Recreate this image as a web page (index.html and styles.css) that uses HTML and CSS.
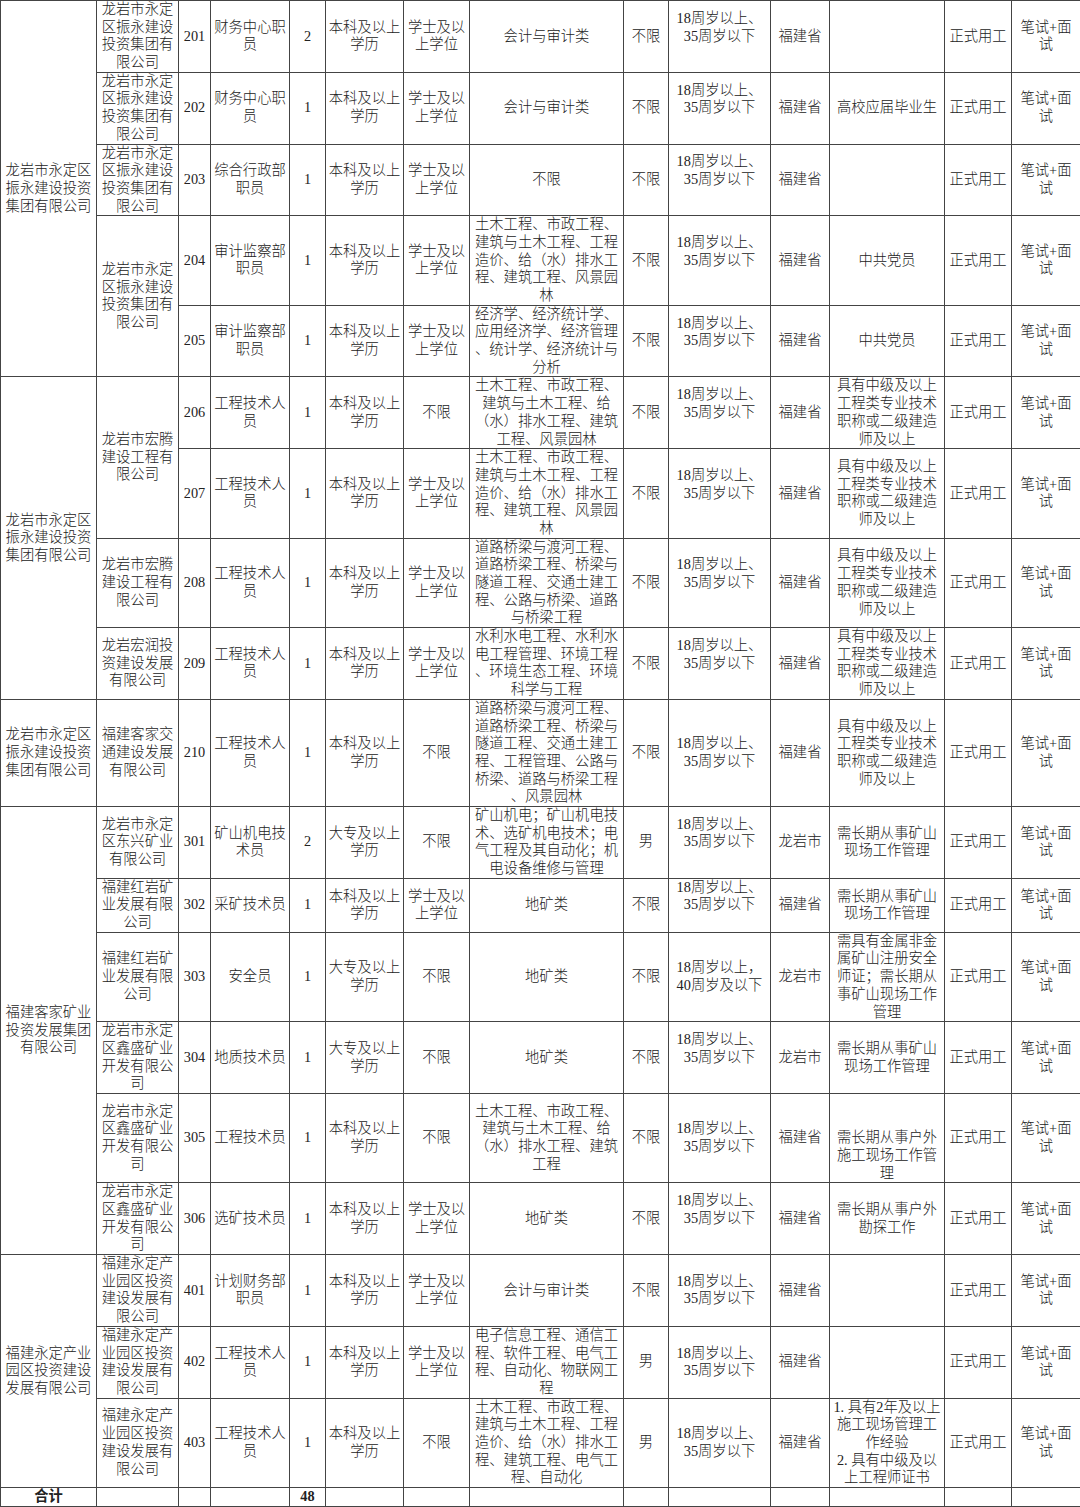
FILE: index.html
```html
<!DOCTYPE html>
<html lang="zh-CN">
<head>
<meta charset="utf-8">
<title>招聘岗位表</title>
<link rel="stylesheet" href="styles.css">
</head>
<body>
<table class="grid">
<colgroup>
<col class="w-grp"><col class="w-sub"><col class="w-code"><col class="w-pos"><col class="w-num"><col class="w-edu"><col class="w-deg"><col class="w-major"><col class="w-sex"><col class="w-age"><col class="w-area"><col class="w-other"><col class="w-type"><col class="w-exam">
</colgroup>
<tbody>
<tr>
<td rowspan="5">龙岩市永定区<br>振永建设投资<br>集团有限公司</td>
<td>龙岩市永定<br>区振永建设<br>投资集团有<br>限公司</td>
<td>201</td><td>财务中心职<br>员</td><td>2</td><td>本科及以上<br>学历</td><td>学士及以<br>上学位</td>
<td>会计与审计类</td><td>不限</td><td class="up">18周岁以上、<br>35周岁以下</td><td>福建省</td><td></td><td>正式用工</td><td>笔试+面<br>试</td>
</tr>
<tr>
<td>龙岩市永定<br>区振永建设<br>投资集团有<br>限公司</td>
<td>202</td><td>财务中心职<br>员</td><td>1</td><td>本科及以上<br>学历</td><td>学士及以<br>上学位</td>
<td>会计与审计类</td><td>不限</td><td class="up">18周岁以上、<br>35周岁以下</td><td>福建省</td><td>高校应届毕业生</td><td>正式用工</td><td>笔试+面<br>试</td>
</tr>
<tr>
<td>龙岩市永定<br>区振永建设<br>投资集团有<br>限公司</td>
<td>203</td><td>综合行政部<br>职员</td><td>1</td><td>本科及以上<br>学历</td><td>学士及以<br>上学位</td>
<td>不限</td><td>不限</td><td class="up">18周岁以上、<br>35周岁以下</td><td>福建省</td><td></td><td>正式用工</td><td>笔试+面<br>试</td>
</tr>
<tr>
<td rowspan="2">龙岩市永定<br>区振永建设<br>投资集团有<br>限公司</td>
<td>204</td><td>审计监察部<br>职员</td><td>1</td><td>本科及以上<br>学历</td><td>学士及以<br>上学位</td>
<td>土木工程、市政工程、<br>建筑与土木工程、工程<br>造价、给（水）排水工<br>程、建筑工程、风景园<br>林</td><td>不限</td><td class="up">18周岁以上、<br>35周岁以下</td><td>福建省</td><td>中共党员</td><td>正式用工</td><td>笔试+面<br>试</td>
</tr>
<tr>
<td>205</td><td>审计监察部<br>职员</td><td>1</td><td>本科及以上<br>学历</td><td>学士及以<br>上学位</td>
<td>经济学、经济统计学、<br>应用经济学、经济管理<br>、统计学、经济统计与<br>分析</td><td>不限</td><td class="up">18周岁以上、<br>35周岁以下</td><td>福建省</td><td>中共党员</td><td>正式用工</td><td>笔试+面<br>试</td>
</tr>
<tr>
<td rowspan="4">龙岩市永定区<br>振永建设投资<br>集团有限公司</td>
<td rowspan="2">龙岩市宏腾<br>建设工程有<br>限公司</td>
<td>206</td><td>工程技术人<br>员</td><td>1</td><td>本科及以上<br>学历</td><td>不限</td>
<td>土木工程、市政工程、<br>建筑与土木工程、给<br>（水）排水工程、建筑<br>工程、风景园林</td><td>不限</td><td class="up">18周岁以上、<br>35周岁以下</td><td>福建省</td><td>具有中级及以上<br>工程类专业技术<br>职称或二级建造<br>师及以上</td><td>正式用工</td><td>笔试+面<br>试</td>
</tr>
<tr>
<td>207</td><td>工程技术人<br>员</td><td>1</td><td>本科及以上<br>学历</td><td>学士及以<br>上学位</td>
<td>土木工程、市政工程、<br>建筑与土木工程、工程<br>造价、给（水）排水工<br>程、建筑工程、风景园<br>林</td><td>不限</td><td class="up">18周岁以上、<br>35周岁以下</td><td>福建省</td><td>具有中级及以上<br>工程类专业技术<br>职称或二级建造<br>师及以上</td><td>正式用工</td><td>笔试+面<br>试</td>
</tr>
<tr>
<td>龙岩市宏腾<br>建设工程有<br>限公司</td>
<td>208</td><td>工程技术人<br>员</td><td>1</td><td>本科及以上<br>学历</td><td>学士及以<br>上学位</td>
<td>道路桥梁与渡河工程、<br>道路桥梁工程、桥梁与<br>隧道工程、交通土建工<br>程、公路与桥梁、道路<br>与桥梁工程</td><td>不限</td><td class="up">18周岁以上、<br>35周岁以下</td><td>福建省</td><td>具有中级及以上<br>工程类专业技术<br>职称或二级建造<br>师及以上</td><td>正式用工</td><td>笔试+面<br>试</td>
</tr>
<tr>
<td>龙岩宏润投<br>资建设发展<br>有限公司</td>
<td>209</td><td>工程技术人<br>员</td><td>1</td><td>本科及以上<br>学历</td><td>学士及以<br>上学位</td>
<td>水利水电工程、水利水<br>电工程管理、环境工程<br>、环境生态工程、环境<br>科学与工程</td><td>不限</td><td class="up">18周岁以上、<br>35周岁以下</td><td>福建省</td><td>具有中级及以上<br>工程类专业技术<br>职称或二级建造<br>师及以上</td><td>正式用工</td><td>笔试+面<br>试</td>
</tr>
<tr>
<td>龙岩市永定区<br>振永建设投资<br>集团有限公司</td>
<td>福建客家交<br>通建设发展<br>有限公司</td>
<td>210</td><td>工程技术人<br>员</td><td>1</td><td>本科及以上<br>学历</td><td>不限</td>
<td>道路桥梁与渡河工程、<br>道路桥梁工程、桥梁与<br>隧道工程、交通土建工<br>程、工程管理、公路与<br>桥梁、道路与桥梁工程<br>、风景园林</td><td>不限</td><td>18周岁以上、<br>35周岁以下</td><td>福建省</td><td>具有中级及以上<br>工程类专业技术<br>职称或二级建造<br>师及以上</td><td>正式用工</td><td>笔试+面<br>试</td>
</tr>
<tr>
<td rowspan="6">福建客家矿业<br>投资发展集团<br>有限公司</td>
<td>龙岩市永定<br>区东兴矿业<br>有限公司</td>
<td>301</td><td>矿山机电技<br>术员</td><td>2</td><td>大专及以上<br>学历</td><td>不限</td>
<td>矿山机电；矿山机电技<br>术、选矿机电技术；电<br>气工程及其自动化；机<br>电设备维修与管理</td><td>男</td><td class="up">18周岁以上、<br>35周岁以下</td><td>龙岩市</td><td>需长期从事矿山<br>现场工作管理</td><td>正式用工</td><td>笔试+面<br>试</td>
</tr>
<tr>
<td>福建红岩矿<br>业发展有限<br>公司</td>
<td>302</td><td>采矿技术员</td><td>1</td><td>本科及以上<br>学历</td><td>学士及以<br>上学位</td>
<td>地矿类</td><td>不限</td><td class="up">18周岁以上、<br>35周岁以下</td><td>福建省</td><td>需长期从事矿山<br>现场工作管理</td><td>正式用工</td><td>笔试+面<br>试</td>
</tr>
<tr>
<td>福建红岩矿<br>业发展有限<br>公司</td>
<td>303</td><td>安全员</td><td>1</td><td>大专及以上<br>学历</td><td>不限</td>
<td>地矿类</td><td>不限</td><td>18周岁以上，<br>40周岁及以下</td><td>龙岩市</td><td>需具有金属非金<br>属矿山注册安全<br>师证；需长期从<br>事矿山现场工作<br>管理</td><td>正式用工</td><td>笔试+面<br>试</td>
</tr>
<tr>
<td>龙岩市永定<br>区鑫盛矿业<br>开发有限公<br>司</td>
<td>304</td><td>地质技术员</td><td>1</td><td>大专及以上<br>学历</td><td>不限</td>
<td>地矿类</td><td>不限</td><td class="up">18周岁以上、<br>35周岁以下</td><td>龙岩市</td><td>需长期从事矿山<br>现场工作管理</td><td>正式用工</td><td>笔试+面<br>试</td>
</tr>
<tr>
<td>龙岩市永定<br>区鑫盛矿业<br>开发有限公<br>司</td>
<td>305</td><td>工程技术员</td><td>1</td><td>本科及以上<br>学历</td><td>不限</td>
<td>土木工程、市政工程、<br>建筑与土木工程、给<br>（水）排水工程、建筑<br>工程</td><td>不限</td><td>18周岁以上、<br>35周岁以下</td><td>福建省</td><td class="low">需长期从事户外<br>施工现场工作管<br>理</td><td>正式用工</td><td>笔试+面<br>试</td>
</tr>
<tr>
<td>龙岩市永定<br>区鑫盛矿业<br>开发有限公<br>司</td>
<td>306</td><td>选矿技术员</td><td>1</td><td>本科及以上<br>学历</td><td>学士及以<br>上学位</td>
<td>地矿类</td><td>不限</td><td class="up">18周岁以上、<br>35周岁以下</td><td>福建省</td><td>需长期从事户外<br>勘探工作</td><td>正式用工</td><td>笔试+面<br>试</td>
</tr>
<tr>
<td rowspan="3">福建永定产业<br>园区投资建设<br>发展有限公司</td>
<td>福建永定产<br>业园区投资<br>建设发展有<br>限公司</td>
<td>401</td><td>计划财务部<br>职员</td><td>1</td><td>本科及以上<br>学历</td><td>学士及以<br>上学位</td>
<td>会计与审计类</td><td>不限</td><td>18周岁以上、<br>35周岁以下</td><td>福建省</td><td></td><td>正式用工</td><td>笔试+面<br>试</td>
</tr>
<tr>
<td>福建永定产<br>业园区投资<br>建设发展有<br>限公司</td>
<td>402</td><td>工程技术人<br>员</td><td>1</td><td>本科及以上<br>学历</td><td>学士及以<br>上学位</td>
<td>电子信息工程、通信工<br>程、软件工程、电气工<br>程、自动化、物联网工<br>程</td><td>男</td><td>18周岁以上、<br>35周岁以下</td><td>福建省</td><td></td><td>正式用工</td><td>笔试+面<br>试</td>
</tr>
<tr>
<td>福建永定产<br>业园区投资<br>建设发展有<br>限公司</td>
<td>403</td><td>工程技术人<br>员</td><td>1</td><td>本科及以上<br>学历</td><td>不限</td>
<td>土木工程、市政工程、<br>建筑与土木工程、工程<br>造价、给（水）排水工<br>程、建筑工程、电气工<br>程、自动化</td><td>男</td><td>18周岁以上、<br>35周岁以下</td><td>福建省</td><td>1. 具有2年及以上<br>施工现场管理工<br>作经验<br>2. 具有中级及以<br>上工程师证书</td><td>正式用工</td><td>笔试+面<br>试</td>
</tr>
<tr class="total">
<td>合计</td><td></td><td></td><td></td><td>48</td><td></td><td></td><td></td><td></td><td></td><td></td><td></td><td></td><td></td>
</tr>
</tbody>
</table>
</body>
</html>
```

FILE: styles.css
```css
html, body {
  margin: 0;
  padding: 0;
  background: #ffffff;
}

.grid {
  width: 1080px;
  table-layout: fixed;
  border-collapse: collapse;
  font-family: "Liberation Serif", "Noto Sans CJK SC", serif;
  font-size: 14.3px;
  line-height: 17.68px;
  color: #222222;
  font-weight: 300;
}

.w-grp { width: 96px; }
.w-sub { width: 82px; }
.w-code { width: 32px; }
.w-pos { width: 79px; }
.w-num { width: 36px; }
.w-edu { width: 78px; }
.w-deg { width: 66px; }
.w-major { width: 154px; }
.w-sex { width: 45px; }
.w-age { width: 102px; }
.w-area { width: 59px; }
.w-other { width: 115px; }
.w-type { width: 67px; }
.w-exam { width: 69px; }

.grid td {
  border: 1px solid #444444;
  padding: 0 1px;
  text-align: center;
  vertical-align: middle;
  white-space: nowrap;
  overflow: visible;
}

.grid td.up {
  padding-bottom: 17.68px;
}

.grid td.low {
  vertical-align: bottom;
  padding-top: 35.36px;
}

.total td {
  font-weight: 700;
}
```
